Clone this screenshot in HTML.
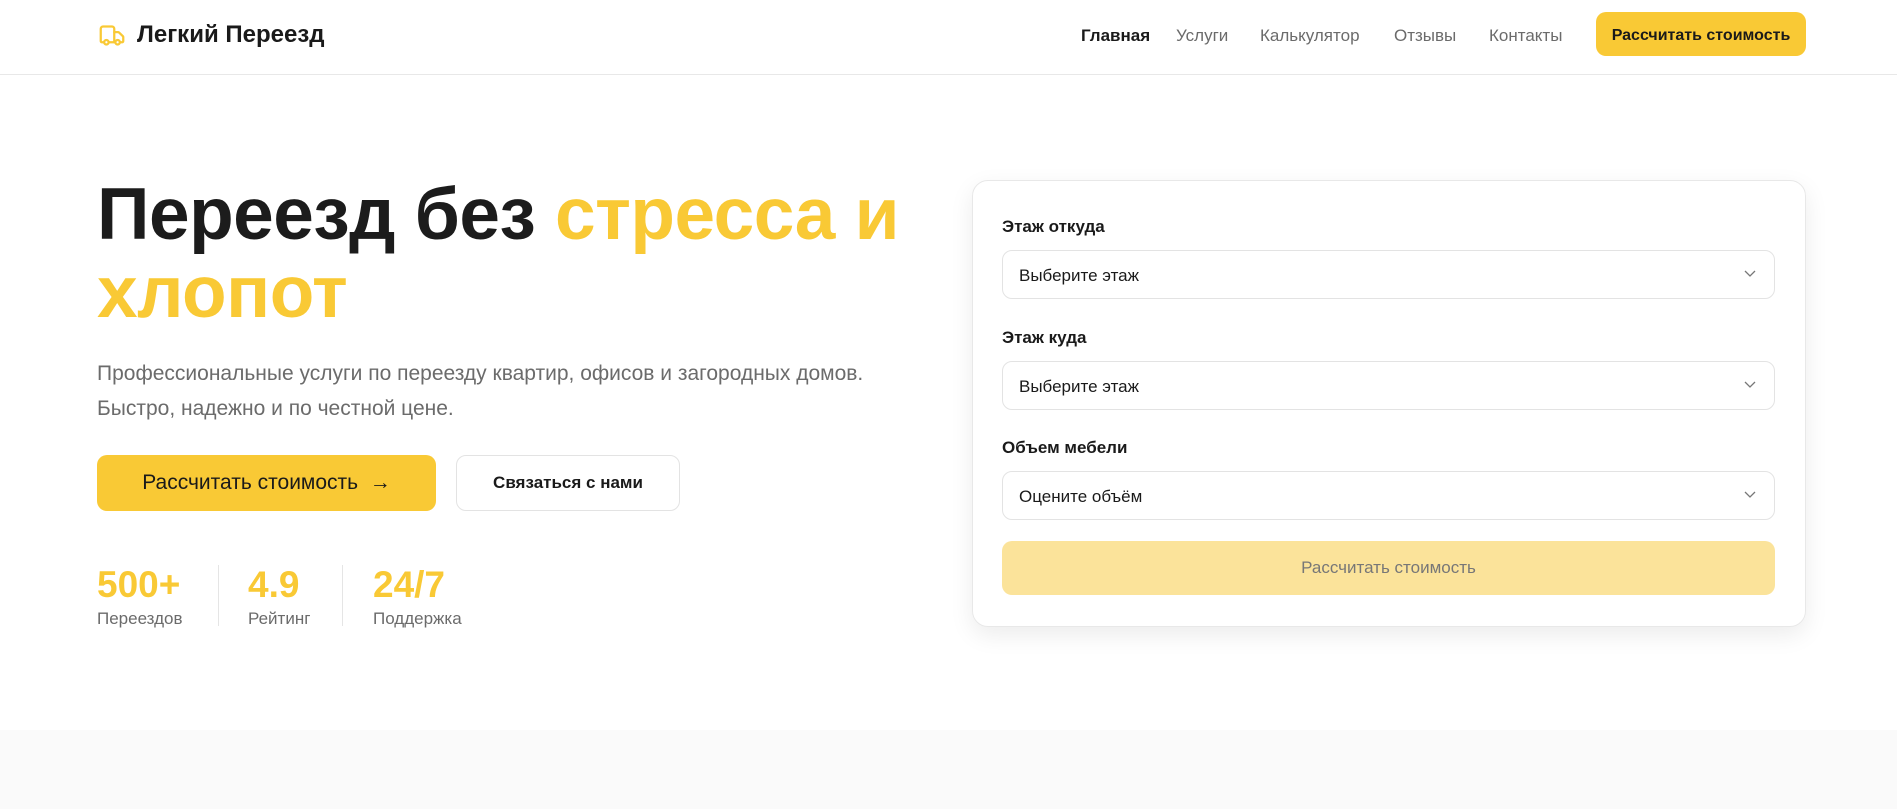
<!DOCTYPE html>
<html><head><meta charset="utf-8"><style>
*{box-sizing:border-box;margin:0;padding:0}
body{width:1897px;height:809px;overflow:hidden;background:#fff;font-family:"Liberation Sans",sans-serif;color:#1a1a1a;position:relative}
.hdr{position:absolute;left:0;top:0;width:1897px;height:75px;border-bottom:1px solid #e8e8e8}
.logo{position:absolute;left:97px;top:21px;display:flex;align-items:center;font-weight:bold;font-size:24px}
.logo svg{margin-right:10px}
.nav{position:absolute;top:26px;font-size:17px;color:#6b6b6b}
.cta{position:absolute;left:1596px;top:12px;width:210px;height:44px;background:#f9c935;border-radius:10px;font-size:16px;font-weight:bold;display:flex;align-items:center;justify-content:center;color:#1a1a1a;padding-top:3px}
h1{position:absolute;left:97px;top:176px;font-size:73px;line-height:78px;font-weight:bold;letter-spacing:-0.5px;color:#1c1c1c}
h1 span{color:#f9c935}
.p{position:absolute;left:97px;top:356px;font-size:21px;line-height:35px;color:#6b6b6b;width:830px}
.b1{position:absolute;left:97px;top:455px;width:339px;height:56px;background:#f9c935;border-radius:10px;font-size:21px;display:flex;align-items:center;justify-content:center}
.b2{position:absolute;left:456px;top:455px;width:224px;height:56px;border:1px solid #e3e3e3;border-radius:10px;font-size:17px;font-weight:bold;display:flex;align-items:center;justify-content:center}
.num{position:absolute;top:564px;font-size:37px;font-weight:bold;color:#f9c935}
.lab{position:absolute;top:609px;font-size:17px;color:#6b6b6b}
.div{position:absolute;top:565px;width:1px;height:61px;background:#e5e5e5}
.card{position:absolute;left:972px;top:180px;width:834px;height:447px;border:1px solid #e8e8e8;border-radius:16px;box-shadow:0 8px 24px rgba(0,0,0,.08)}
.l{position:absolute;left:1002px;font-size:17px;font-weight:bold}
.sel{position:absolute;left:1002px;width:773px;height:49px;border:1px solid #e3e3e3;border-radius:10px;font-size:17px;padding-left:16px;padding-top:3px;display:flex;align-items:center}
.sel svg{position:absolute;right:18px;top:19px}
.go{position:absolute;left:1002px;top:541px;width:773px;height:54px;background:#fbe39a;border-radius:10px;color:#777;font-size:17px;display:flex;align-items:center;justify-content:center}
.gray{position:absolute;left:0;top:730px;width:1897px;height:79px;background:#fafafa}
</style></head><body>
<div class="hdr">
<div class="logo"><svg width="30" height="27" viewBox="0 0 24 24" fill="none" stroke="#f9c935" stroke-width="2" stroke-linecap="round" stroke-linejoin="round"><path d="M14 18V6a2 2 0 0 0-2-2H4a2 2 0 0 0-2 2v11a1 1 0 0 0 1 1h2"/><path d="M15 18H9"/><path d="M19 18h2a1 1 0 0 0 1-1v-3.65a1 1 0 0 0-.22-.62L18.3 9.38A1 1 0 0 0 17.52 9H14"/><circle cx="17" cy="18" r="2"/><circle cx="7" cy="18" r="2"/></svg>Легкий Переезд</div>
<div class="nav" style="left:1081px;color:#1a1a1a;font-weight:bold">Главная</div>
<div class="nav" style="left:1176px">Услуги</div>
<div class="nav" style="left:1260px">Калькулятор</div>
<div class="nav" style="left:1394px">Отзывы</div>
<div class="nav" style="left:1489px">Контакты</div>
<div class="cta">Рассчитать стоимость</div>
</div>
<h1>Переезд без <span>стресса и<br>хлопот</span></h1>
<div class="p">Профессиональные услуги по переезду квартир, офисов и загородных домов.<br>Быстро, надежно и по честной цене.</div>
<div class="b1">Рассчитать стоимость&nbsp;&nbsp;→</div>
<div class="b2">Связаться с нами</div>
<div class="num" style="left:97px">500+</div><div class="lab" style="left:97px">Переездов</div>
<div class="div" style="left:218px"></div>
<div class="num" style="left:248px">4.9</div><div class="lab" style="left:248px">Рейтинг</div>
<div class="div" style="left:342px"></div>
<div class="num" style="left:373px">24/7</div><div class="lab" style="left:373px">Поддержка</div>
<div class="card"></div>
<div class="l" style="top:217px">Этаж откуда</div>
<div class="sel" style="top:250px">Выберите этаж<svg width="12" height="8" viewBox="0 0 12 8" fill="none" stroke="#777" stroke-width="1.3"><path d="M1 1l5 5 5-5"/></svg></div>
<div class="l" style="top:328px">Этаж куда</div>
<div class="sel" style="top:361px">Выберите этаж<svg width="12" height="8" viewBox="0 0 12 8" fill="none" stroke="#777" stroke-width="1.3"><path d="M1 1l5 5 5-5"/></svg></div>
<div class="l" style="top:438px">Объем мебели</div>
<div class="sel" style="top:471px">Оцените объём<svg width="12" height="8" viewBox="0 0 12 8" fill="none" stroke="#777" stroke-width="1.3"><path d="M1 1l5 5 5-5"/></svg></div>
<div class="go">Рассчитать стоимость</div>
<div class="gray"></div>
</body></html>
